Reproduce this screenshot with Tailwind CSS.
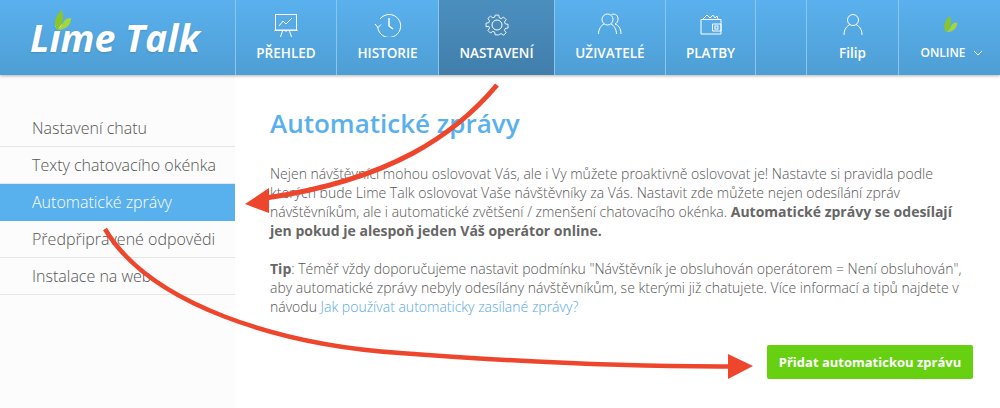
<!DOCTYPE html>
<html lang="cs"><head><meta charset="utf-8"><script src="https://cdn.jsdelivr.net/npm/@tailwindcss/browser@4"></script></head>
<body class="bg-white">
<div class="relative w-[1000px] h-[408px] overflow-hidden font-['Open_Sans',sans-serif] text-[#666]">
<header class="relative z-10 flex h-[75px] bg-gradient-to-b from-[#5ab1ee] to-[#4e9ed4] shadow-[0_1px_3px_rgba(0,0,0,0.3)] text-white">
  <div class="relative w-[235px] shrink-0">
    <span class="absolute left-[30px] top-[15px] text-[37.500px] leading-[46px] italic font-bold [text-shadow:0_1px_2px_rgba(0,0,0,0.15)] whitespace-nowrap">Lime Talk</span>
    <svg class="absolute left-[52px] top-[9px]" width="20" height="22" viewBox="0 0 20 22"><path d="M10 1C5 5 3 11 3 14c0 3 1 6 2 7 4-3 6-8 6-13 0-3-1-5-1-7z" fill="#8cc626"/><path d="M19 9c-4 0-7 2-8 5-1 2-3 5-5 7 6 0 10-3 12-7 1-2 1-4 1-5z" fill="#a3d63c"/></svg>
  </div>
  <nav class="flex text-[13.500px] font-semibold">
    <a class="w-[101px] border-l border-[#8cc5ee] flex flex-col items-center pt-[13px]">
      <svg width="24" height="24" viewBox="0 0 24 24" fill="none" stroke="currentColor" stroke-width="1"><rect x="1.500" y="1.500" width="21" height="15.500"/><path d="M0.500 17.500h23M5 13l4-5 3 3 6-6M8.500 18l-2 6M15.500 18l2 6M12 18v1"/></svg>
      <span class="mt-[6px] leading-[20px]">PŘEHLED</span>
    </a>
    <a class="w-[102px] border-l border-[#8cc5ee] flex flex-col items-center pt-[13px]">
      <svg width="28" height="24" viewBox="0 0 28 24" fill="none" stroke="currentColor" stroke-width="1"><path d="M3.700 14A11.500 11.500 0 1 0 6 6"/><path d="M1 11l3 3.500 3-3"/><path d="M15 5v8l4 3" stroke-width="1.400"/></svg>
      <span class="mt-[6px] leading-[20px]">HISTORIE</span>
    </a>
    <a class="w-[116px] border-l border-[#8cc5ee] flex flex-col items-center pt-[13px] bg-gradient-to-b from-[#4b8fbf] to-[#417eab]">
      <svg width="24" height="24" viewBox="0 0 24 24" fill="none" stroke="currentColor" stroke-width="1"><circle cx="12" cy="12" r="5"/><path d="M10 1h4l.6 3.100 2 .8 2.700-1.700 2.800 2.800-1.800 2.700.8 2 3.200.6v4l-3.200.6-.8 2 1.800 2.700-2.800 2.800-2.700-1.800-2 .8L14 23h-4l-.6-3.100-2-.8-2.700 1.800-2.800-2.800 1.800-2.700-.8-2L-.2 14v-4l3.100-.6.800-2L1.900 4.700l2.800-2.500 2.700 1.800 2-.8z" transform="translate(1.200 1.200) scale(.9)"/></svg>
      <span class="mt-[6px] leading-[20px]">NASTAVENÍ</span>
    </a>
    <a class="w-[111px] border-l border-[#8cc5ee] flex flex-col items-center pt-[13px]">
      <svg width="24" height="24" viewBox="0 0 24 24" fill="none" stroke="currentColor" stroke-width="1"><circle cx="9.500" cy="6.500" r="5.500"/><path d="M0.500 21c0-5 3-9 5.500-10M18.500 21c0-5-3-9-5.500-10M13.500 1.500c4-1.500 7 1.500 6.500 5 0 2-1 3.500-3 4.500 3 1 6 4 6 10"/></svg>
      <span class="mt-[6px] leading-[20px]">UŽIVATELÉ</span>
    </a>
    <a class="w-[90px] border-l border-[#8cc5ee] flex flex-col items-center pt-[13px]">
      <svg width="22" height="24" viewBox="0 0 22 24" fill="none" stroke="currentColor" stroke-width="1"><path d="M1 6.500h20V21H1zM12.500 11H21v7h-8.500z"/><rect x="15" y="13" width="3" height="3"/><path d="M3 6l4-4 3 3 3-3 2 3 2-2 1 3"/></svg>
      <span class="mt-[6px] leading-[20px]">PLATBY</span>
    </a>
    <div class="w-[51px] border-l border-[#8cc5ee]"></div>
    <a class="w-[92px] border-l border-[#8cc5ee] flex flex-col items-center pt-[13px]">
      <svg width="20" height="24" viewBox="0 0 20 24" fill="none" stroke="currentColor" stroke-width="1"><circle cx="10" cy="7" r="5.500"/><path d="M1 22c0-6 3-9 6-10.500M19 22c0-6-3-9-6-10.500"/></svg>
      <span class="mt-[6px] leading-[20px]">Filip</span>
    </a>
    <a class="w-[102px] border-l border-[#8cc5ee] flex flex-col items-center pt-[15px]">
      <svg width="16" height="18" viewBox="0 0 20 22"><path d="M10 1C5 5 3 11 3 14c0 3 1 6 2 7 4-3 6-8 6-13 0-3-1-5-1-7z" fill="#8cc626"/><path d="M19 9c-4 0-7 2-8 5-1 2-3 5-5 7 6 0 10-3 12-7 1-2 1-4 1-5z" fill="#a3d63c"/></svg>
      <span class="mt-[10px] leading-[20px] text-[12px] flex items-center gap-[7px] pl-[4px]">ONLINE <svg width="10" height="6" viewBox="0 0 10 6" fill="none" stroke="currentColor"><path d="M1 1l4 4 4-4"/></svg></span>
    </a>
  </nav>
</header>
<div class="flex h-[333px]">
  <aside class="w-[235px] shrink-0 bg-[#fcfcfc] pt-[35px] text-[16px] font-light text-[#555]">
    <a class="block h-[37px] pl-[32px] leading-[36px] border-b border-[#e6e6e6]">Nastavení chatu</a>
    <a class="block h-[37px] pl-[32px] leading-[36px] border-b border-[#e6e6e6]">Texty chatovacího okénka</a>
    <a class="block h-[37px] pl-[32px] leading-[37px] bg-[#58b0ec] text-white">Automatické zprávy</a>
    <a class="block h-[37px] pl-[32px] leading-[36px] border-b border-[#e6e6e6]">Předpřipravené odpovědi</a>
    <a class="block h-[37px] pl-[32px] leading-[36px] border-b border-[#e6e6e6]">Instalace na web</a>
  </aside>
  <main class="flex-1 pl-[35px] pr-[27px] pt-[30px]">
    <h1 class="text-[26px] leading-[36px] font-semibold text-[#58b0ec]">Automatické zprávy</h1>
    <p class="mt-[23px] text-[14px] leading-[19px] font-light text-[#555]">Nejen návštěvníci mohou oslovovat Vás, ale i Vy můžete proaktivně oslovovat je! Nastavte si pravidla podle kterých bude Lime Talk oslovovat Vaše návštěvníky za Vás. Nastavit zde můžete nejen odesílání zpráv návštěvníkům, ale i automatické zvětšení / zmenšení chatovacího okénka. <b class="font-bold text-[#666]">Automatické zprávy se odesílají jen pokud je alespoň jeden Váš operátor online.</b></p>
    <p class="mt-[19px] text-[14px] leading-[19px] font-light text-[#555]"><b class="font-bold text-[#666]">Tip</b>: Téměř vždy doporučujeme nastavit podmínku "Návštěvník je obsluhován operátorem = Není obsluhován", aby automatické zprávy nebyly odesílány návštěvníkům, se kterými již chatujete. Více informací a tipů najdete v návodu <a class="text-[#58a9e4]">Jak používat automaticky zasílané zprávy?</a></p>
    <div class="flex justify-end mt-[29px]"><a class="w-[206px] h-[34px] rounded-[2px] bg-[#66d011] text-white text-[13px] font-bold leading-[34px] text-center">Přidat automatickou zprávu</a></div>
  </main>
</div>
<svg class="absolute inset-0 z-20 pointer-events-none" width="1000" height="408" viewBox="0 0 1000 408" fill="none">
  <path d="M497 85C455 135 390 180 266 198" stroke="#ee462c" stroke-width="5"/>
  <path d="M245 204L269 188V213Z" fill="#ee462c"/>
  <path d="M105 229C150 305 280 345 400 353C480 359 600 367 730 366.500" stroke="#ee462c" stroke-width="4.500"/>
  <path d="M753 366L728 354V379Z" fill="#ee462c"/>
</svg>
</div>
</body></html>
